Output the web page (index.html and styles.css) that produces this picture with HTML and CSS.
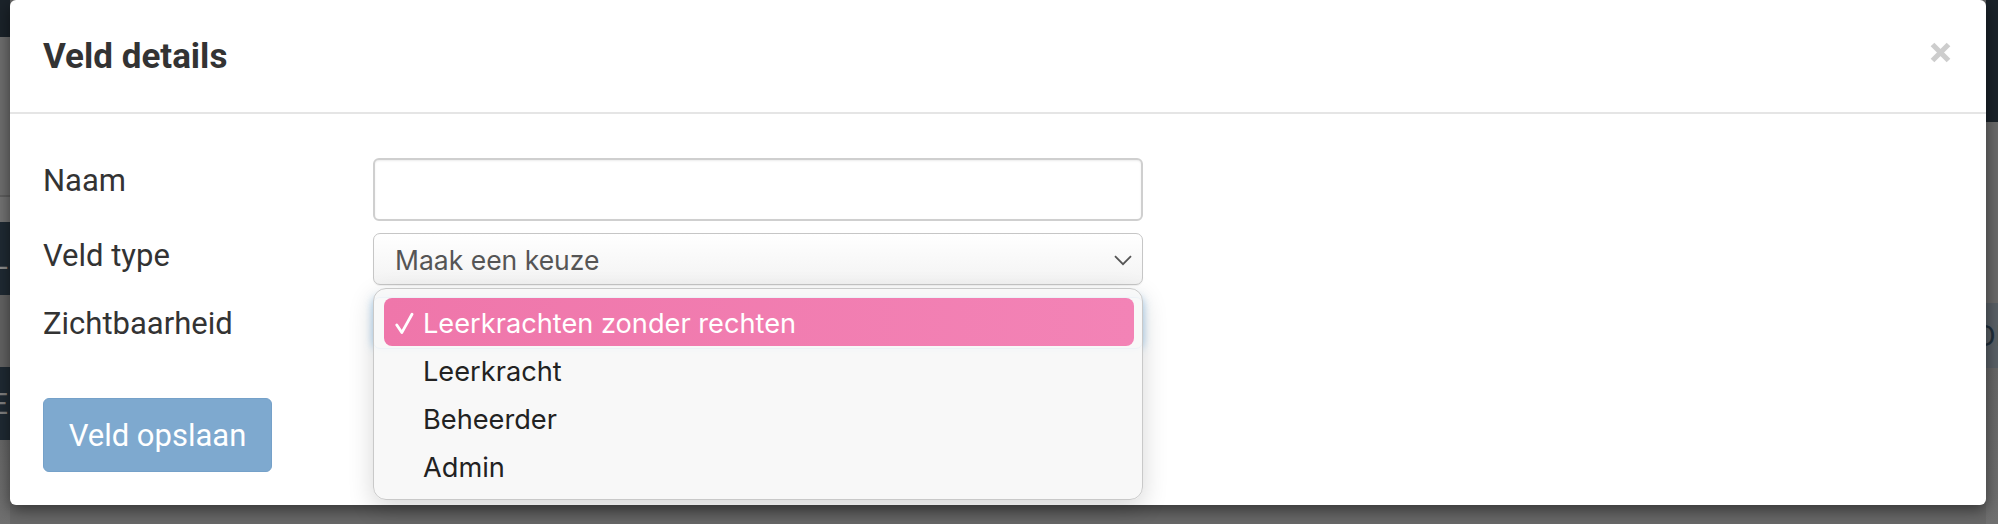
FILE: index.html
```html
<!DOCTYPE html>
<html lang="nl">
<head>
<meta charset="utf-8">
<title>Veld details</title>
<link rel="stylesheet" href="styles.css">
</head>
<body>
<div class="page">
  <div class="strip strip-left">
    <div class="band band-nav"></div>
    <div class="band band-grey-a"></div>
    <div class="band band-grey-b"></div>
    <div class="band band-dark"><span class="ghost ghost-l">IL</span></div>
    <div class="band band-grey-c"></div>
    <div class="band band-dark"><span class="ghost ghost-e">BE</span></div>
    <div class="band band-fill"></div>
  </div>
  <div class="strip strip-mid"></div>
  <div class="strip strip-right">
    <div class="band band-nav-r"></div>
    <div class="band band-grey-r"></div>
    <div class="band band-mid-r"><span class="ghost ghost-df">DF</span></div>
    <div class="band band-fill"></div>
  </div>

  <div class="modal">
    <div class="modal-header">
      <h4 class="modal-title">Veld details</h4>
      <svg class="close" width="21" height="21" viewBox="0 0 21 21" aria-label="Sluiten">
        <path d="M2.5 2.5 L18.5 18.5 M18.5 2.5 L2.5 18.5" stroke="#cdcdcd" stroke-width="5.2" fill="none"/>
      </svg>
    </div>
    <div class="modal-body">
      <div class="form">
        <label class="lbl">Naam</label>
        <div class="input"></div>
        <label class="lbl">Veld type</label>
        <div class="select">
          <span>Maak een keuze</span>
          <svg width="18" height="11" viewBox="0 0 18 11"><path d="M1 1.2 L9 9.2 L17 1.2" stroke="#555" stroke-width="1.8" fill="none"/></svg>
        </div>
        <label class="lbl lbl-last">Zichtbaarheid</label>
        <div class="select select-focus"></div>
      </div>
      <button class="btn">Veld opslaan</button>
    </div>

    <div class="dropdown">
      <div class="opt opt-sel">
        <span class="check"><svg width="19" height="23" viewBox="0 0 19 23"><path d="M1.8 13 L6.8 20.6 L17 2.2" stroke="#fff" stroke-width="2.8" stroke-linecap="round" stroke-linejoin="round" fill="none"/></svg></span>
        <span>Leerkrachten zonder rechten</span>
      </div>
      <div class="opt"><span class="check"></span><span>Leerkracht</span></div>
      <div class="opt"><span class="check"></span><span>Beheerder</span></div>
      <div class="opt"><span class="check"></span><span>Admin</span></div>
    </div>
  </div>
</div>
</body>
</html>
```
FILE: styles.css
```css
* { box-sizing: border-box; }
html, body { margin: 0; padding: 0; }
body {
  width: 1998px;
  height: 524px;
  overflow: hidden;
  background: #666;
  font-family: Roboto, "Liberation Sans", sans-serif;
}
.page {
  position: relative;
  width: 1998px;
  height: 524px;
  display: flex;
}
.strip { display: flex; flex-direction: column; overflow: hidden; }
.strip-left { width: 10px; }
.strip-mid { flex: 1; background: #686868; }
.strip-right { width: 12px; }
.band { flex: none; overflow: hidden; white-space: nowrap; }
.band-nav { height: 37px; background: #1b232a; }
.band-grey-a { height: 160px; background: #6e6e6e; border-bottom: 2px solid #5e5e5e; }
.band-grey-b { height: 25px; background: #737373; }
.band-dark { height: 73px; background: #1f2a33; display: flex; justify-content: flex-end; align-items: center; }
.band-grey-c { height: 72px; background: #636363; }
.band-fill { flex: 1; background: linear-gradient(#676767, #707070); }
.band-nav-r { height: 122px; background: #1b232a; }
.band-grey-r { height: 181px; background: #6a6a6a; }
.band-mid-r { height: 65px; background: #596066; display: flex; align-items: center; }
.ghost { font-size: 30px; line-height: 1; flex: none; }
.ghost-l { color: #8d8d8d; margin-right: 2px; }
.ghost-e { color: #7f7f7f; margin-right: 2px; }
.ghost-df { color: #1f2e3a; margin-left: -10px; }

.modal {
  position: absolute;
  left: 10px;
  top: 0;
  width: 1976px;
  background: #fff;
  border-radius: 6px;
  box-shadow: 0 5px 15px rgba(0, 0, 0, .5);
  color: #333;
}
.modal-header {
  height: 114px;
  border-bottom: 2px solid #e5e5e5;
  display: flex;
  align-items: center;
  justify-content: space-between;
  padding: 0 35px 0 33px;
}
.modal-title {
  margin: 0;
  font-size: 35px;
  font-weight: 700;
  line-height: 1;
  color: #333;
}
.close { align-self: flex-start; margin-top: 42px; }
.modal-body { padding: 44px 33px 33px; }
.form {
  display: grid;
  grid-template-columns: 330px 770px;
  row-gap: 12px;
}
.lbl {
  font-size: 31px;
  line-height: 31px;
  padding-top: 7px;
  color: #333;
}
.lbl-last { padding-top: 11px; }
.input {
  height: 63px;
  border: 2px solid #cfcfcf;
  border-radius: 6px;
  background: #fff;
  box-shadow: inset 0 1px 2px rgba(0, 0, 0, .08);
}
.select {
  height: 52px;
  border: 1px solid #c6c6c6;
  border-radius: 7px;
  background: linear-gradient(#fff, #f3f3f3);
  box-shadow: 0 1px 1px rgba(0, 0, 0, .06);
  display: flex;
  align-items: center;
  justify-content: space-between;
  padding: 2px 10px 0 21px;
  font-family: Inter, "Noto Sans", sans-serif;
  font-size: 26.5px;
  color: #555;
}
.select-focus {
  border-color: #66afe9;
  box-shadow: 0 0 8px rgba(102, 175, 233, .6);
}
.btn {
  display: block;
  margin-top: 49px;
  width: 229px;
  height: 74px;
  padding: 0;
  background: #7ea9cf;
  border: 1px solid #75a1c9;
  border-radius: 6px;
  color: #fff;
  font-family: Roboto, "Liberation Sans", sans-serif;
  font-size: 31px;
  line-height: 1;
}

.dropdown {
  position: absolute;
  left: 363px;
  top: 288px;
  width: 770px;
  padding: 9px 8px 9px 10px;
  border: 1px solid #c9c9c9;
  border-radius: 13px;
  background: rgba(248, 248, 248, .93);
  box-shadow: 0 8px 26px rgba(0, 0, 0, .16);
  font-family: Inter, "Noto Sans", sans-serif;
  font-size: 27.2px;
  color: #222;
}
.opt {
  height: 48px;
  display: flex;
  align-items: center;
  padding: 3px 0 0 11px;
  border-radius: 8px;
}
.opt-sel {
  background: linear-gradient(90deg, #ef76aa, #f383b6);
  color: #fff;
}
.check {
  width: 28px;
  flex: none;
  display: flex;
  align-items: center;
}
```
